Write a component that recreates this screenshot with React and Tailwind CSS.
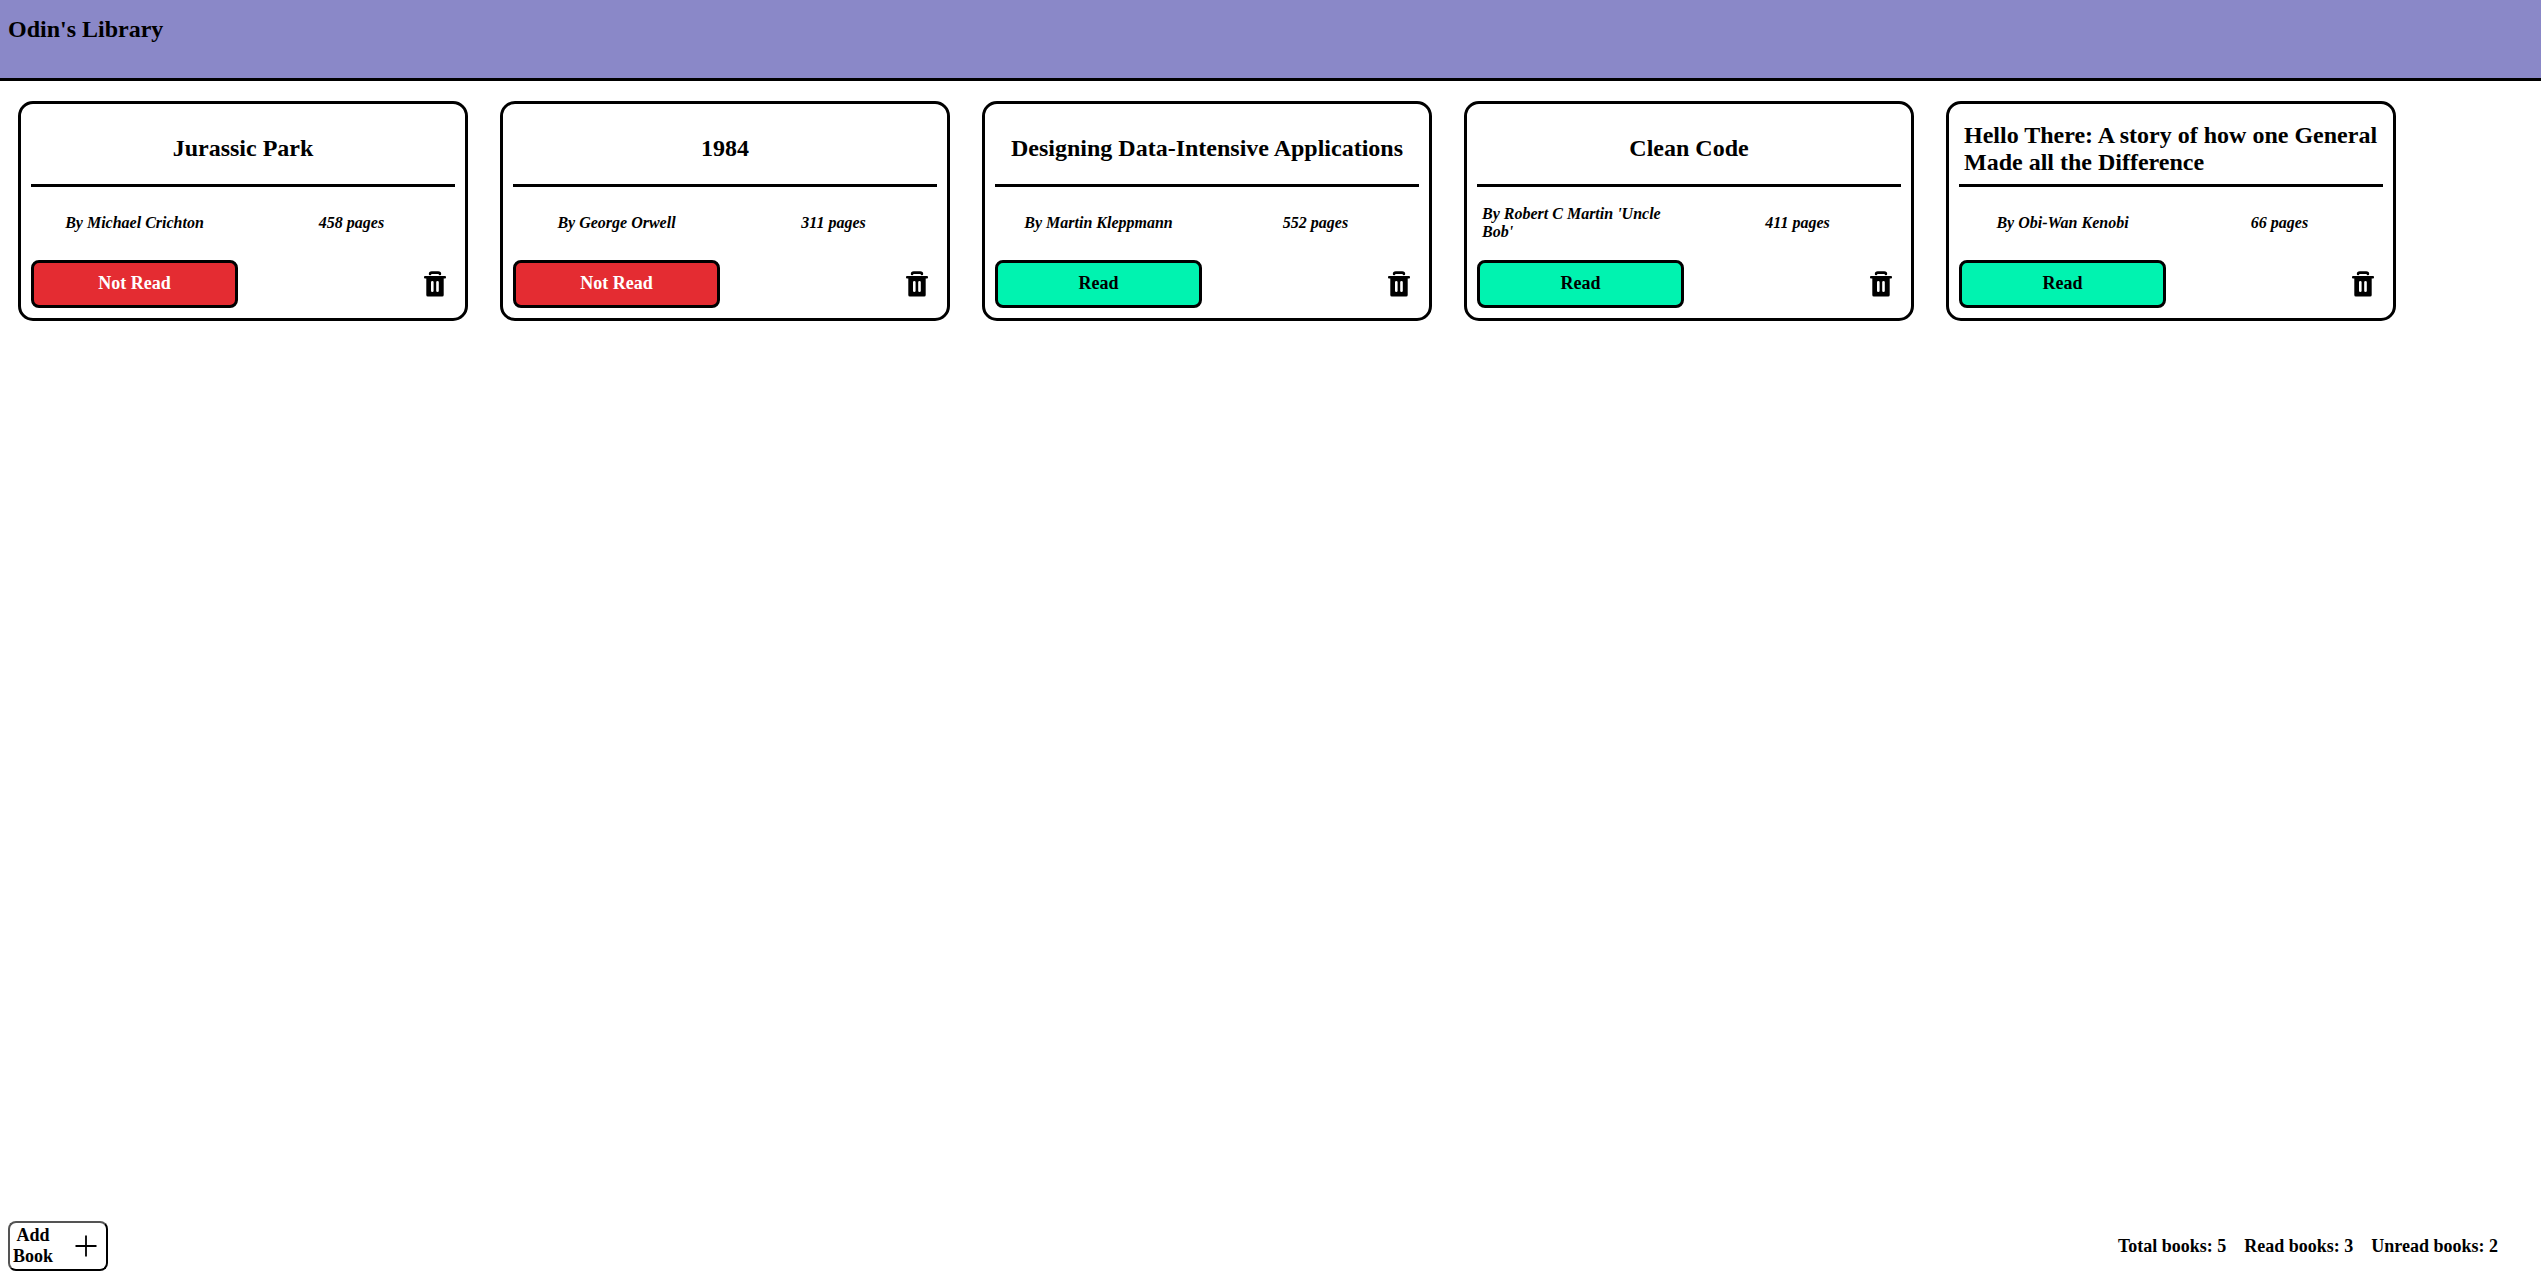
const books = [
  { title: "Jurassic Park", author: "Michael Crichton", pages: 458, read: false },
  { title: "1984", author: "George Orwell", pages: 311, read: false },
  { title: "Designing Data-Intensive Applications", author: "Martin Kleppmann", pages: 552, read: true },
  { title: "Clean Code", author: "Robert C Martin 'Uncle Bob'", pages: 411, read: true },
  { title: "Hello There: A story of how one General Made all the Difference", author: "Obi-Wan Kenobi", pages: 66, read: true },
];

function TrashIcon() {
  return (
    <svg width="22" height="26" viewBox="0 0 22 26" fill="none">
      <path d="M6.1 2.9Q6.1 1.6 7.8 1.6h6.4Q15.9 1.6 15.9 2.9" stroke="#000" strokeWidth="2.6" strokeLinecap="round" />
      <rect x="0" y="4.9" width="22" height="2.6" rx="1" fill="#000" />
      <path
        fillRule="evenodd"
        fill="#000"
        d="M2.3 7h17.4v16.9a1.5 1.5 0 0 1-1.5 1.5H3.8a1.5 1.5 0 0 1-1.5-1.5zM7 11.2v8.6a1.3 1.3 0 0 0 2.6 0v-8.6a1.3 1.3 0 0 0-2.6 0zM12.2 11.2v8.6a1.3 1.3 0 0 0 2.6 0v-8.6a1.3 1.3 0 0 0-2.6 0z"
      />
    </svg>
  );
}

function BookCard({ book }) {
  return (
    <article className="grid h-[220px] w-[450px] grid-cols-2 grid-rows-[73px_53px_48px] gap-[10px] rounded-[15px] border-3 border-black p-[10px]">
      <h2 className="col-span-2 flex items-center justify-center border-b-3 border-black px-[5px] pb-px text-[24px] leading-[27px] font-bold">
        {book.title}
      </h2>
      <p className="flex items-center justify-center px-[5px] pb-px text-[16px] leading-[18px] font-bold italic">
        By {book.author}
      </p>
      <p className="flex items-center justify-center px-[5px] pb-px text-[16px] leading-[18px] font-bold italic">
        {book.pages} pages
      </p>
      <button
        className={
          book.read
            ? "rounded-[8px] border-3 border-black bg-[#00f3b0] pb-[2px] text-[18px] leading-[20px] font-bold text-black"
            : "rounded-[8px] border-3 border-black bg-[#e42c32] pb-[2px] text-[18px] leading-[20px] font-bold text-white"
        }
      >
        {book.read ? "Read" : "Not Read"}
      </button>
      <button className="flex items-center justify-end pr-[9px]" aria-label="Delete">
        <TrashIcon />
      </button>
    </article>
  );
}

export default function App() {
  const readCount = books.filter((b) => b.read).length;
  return (
    <div className="flex h-screen flex-col bg-white font-['Liberation_Serif',serif] text-black">
      <header className="h-[81px] shrink-0 border-b-3 border-black bg-[#8a88c8] px-2 pt-4">
        <h1 className="text-[24px] leading-[27px] font-bold">Odin's Library</h1>
      </header>
      <main className="flex grow flex-wrap content-start gap-8 px-[18px] pt-5">
        {books.map((book) => (
          <BookCard key={book.title} book={book} />
        ))}
      </main>
      <footer className="flex h-[55px] shrink-0 items-start justify-between pr-[43px] pl-2">
        <button className="flex h-[50px] w-[100px] items-center justify-between rounded-[8px] border-2 border-black pr-[9px] pl-[3px] [border-style:outset]">
          <span className="w-[40px] text-center text-[18px] leading-[21px] font-bold">Add Book</span>
          <svg width="22" height="22" viewBox="0 0 22 22" stroke="#000" strokeWidth="1.8">
            <path d="M11 .5v21M.5 11h21" />
          </svg>
        </button>
        <div className="flex h-[50px] items-center gap-[18px] text-[18px] leading-[20px] font-bold">
          <p>Total books: {books.length}</p>
          <p>Read books: {readCount}</p>
          <p>Unread books: {books.length - readCount}</p>
        </div>
      </footer>
    </div>
  );
}
